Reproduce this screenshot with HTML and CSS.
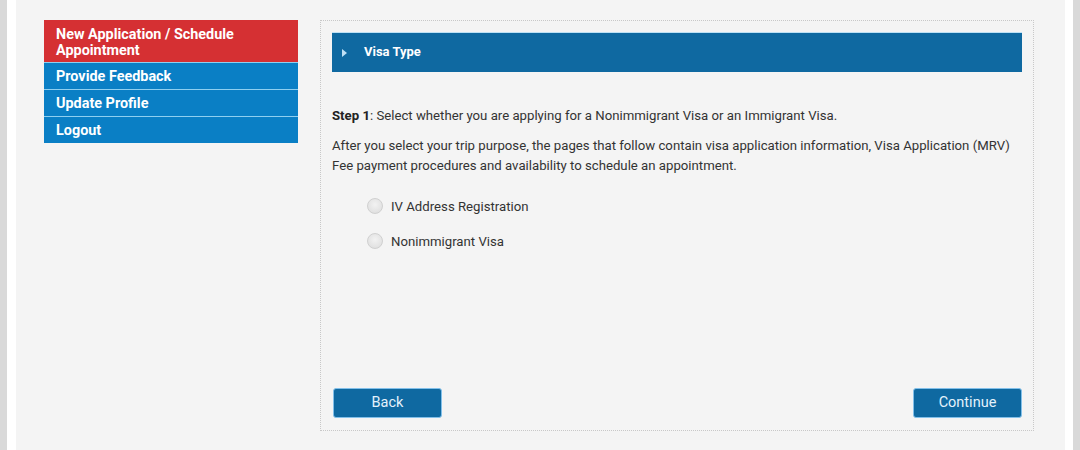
FILE: index.html
```html
<!DOCTYPE html>
<html>
<head>
<meta charset="utf-8">
<link rel="stylesheet" href="styles.css">
</head>
<body>
<div class="frame">
  <div class="page">
    <nav class="sidebar">
      <a class="nav-item active">New Application / Schedule Appointment</a>
      <a class="nav-item">Provide Feedback</a>
      <a class="nav-item">Update Profile</a>
      <a class="nav-item">Logout</a>
    </nav>
    <main class="panel">
      <div class="panel-head">
        <span class="tri"></span>
        <span class="head-title">Visa Type</span>
      </div>
      <div class="panel-body">
        <p class="step"><b>Step 1</b>: Select whether you are applying for a Nonimmigrant Visa or an Immigrant Visa.</p>
        <p class="intro">After you select your trip purpose, the pages that follow contain visa application information, Visa Application (MRV) Fee payment procedures and availability to schedule an appointment.</p>
        <div class="options">
          <label class="option"><span class="radio"></span>IV Address Registration</label>
          <label class="option"><span class="radio"></span>Nonimmigrant Visa</label>
        </div>
      </div>
      <div class="actions">
        <button class="btn">Back</button>
        <button class="btn">Continue</button>
      </div>
    </main>
  </div>
</div>
</body>
</html>
```

FILE: styles.css
```css
html, body {
  margin: 0;
  padding: 0;
  height: 100%;
}
body {
  background: #d9d9d9;
  font-family: Roboto, "Liberation Sans", Arial, sans-serif;
  color: #333;
}
.frame {
  margin: 0 7px;
  padding: 0 8px 0 9px;
  background: #fff;
  height: 450px;
}
.page {
  background: #f4f4f4;
  height: 450px;
  display: flex;
  align-items: flex-start;
  padding: 20px 0 0 28px;
  box-sizing: border-box;
}
.sidebar {
  width: 254px;
  display: flex;
  flex-direction: column;
}
.nav-item {
  display: block;
  background: #0a7fc5;
  color: #fff;
  font-weight: bold;
  font-size: 14.4px;
  line-height: 15px;
  padding: 6px 12px 5px 12px;
  border-top: 1px solid #8fcff0;
}
.nav-item.active {
  background: #d53033;
  border-top: none;
  padding: 7px 12px 4px 12px;
  line-height: 15.5px;
}
.panel {
  margin-left: 22px;
  width: 714px;
  height: 411px;
  box-sizing: border-box;
  border: 1px dotted #c8c8c8;
  padding: 11px 11px 12px 11px;
  display: flex;
  flex-direction: column;
}
.panel-head {
  height: 40px;
  background: #0f69a1;
  border-top: 1px solid #bfe2f5;
  box-sizing: border-box;
  display: flex;
  align-items: center;
  padding-left: 10px;
}
.tri {
  width: 0;
  height: 0;
  border-left: 5px solid #bfe0f5;
  border-top: 4.5px solid transparent;
  border-bottom: 4.5px solid transparent;
}
.head-title {
  color: #fff;
  font-weight: bold;
  font-size: 13px;
  margin-left: 17px;
  margin-top: -3px;
}
.panel-body {
  flex: 1;
  padding-top: 34px;
  font-size: 13.2px;
}
.panel-body p {
  margin: 0;
  line-height: 20px;
}
.step {
  margin-bottom: 10px !important;
}
.step b {
  color: #222;
}
.options {
  display: flex;
  flex-direction: column;
  gap: 15px;
  margin-top: 20px;
  padding-left: 35px;
}
.option {
  display: flex;
  align-items: center;
  height: 20px;
  font-size: 13.2px;
  color: #333;
}
.radio {
  width: 16px;
  height: 16px;
  border-radius: 50%;
  background: radial-gradient(circle at 50% 40%, #f2f2f2 0%, #e2e2e2 70%, #d6d6d6 100%);
  border: 1px solid #d0d0d0;
  box-sizing: border-box;
  margin-right: 8px;
}
.actions {
  display: flex;
  justify-content: space-between;
  padding: 0 0 0 1px;
}
.btn {
  width: 109px;
  height: 30px;
  background: #0f69a1;
  border: 1px solid #82c0ea;
  border-radius: 3px;
  color: #e4f2fc;
  font-family: Roboto, "Liberation Sans", Arial, sans-serif;
  font-size: 14.5px;
  padding: 0;
  padding-bottom: 1px;
}
```
